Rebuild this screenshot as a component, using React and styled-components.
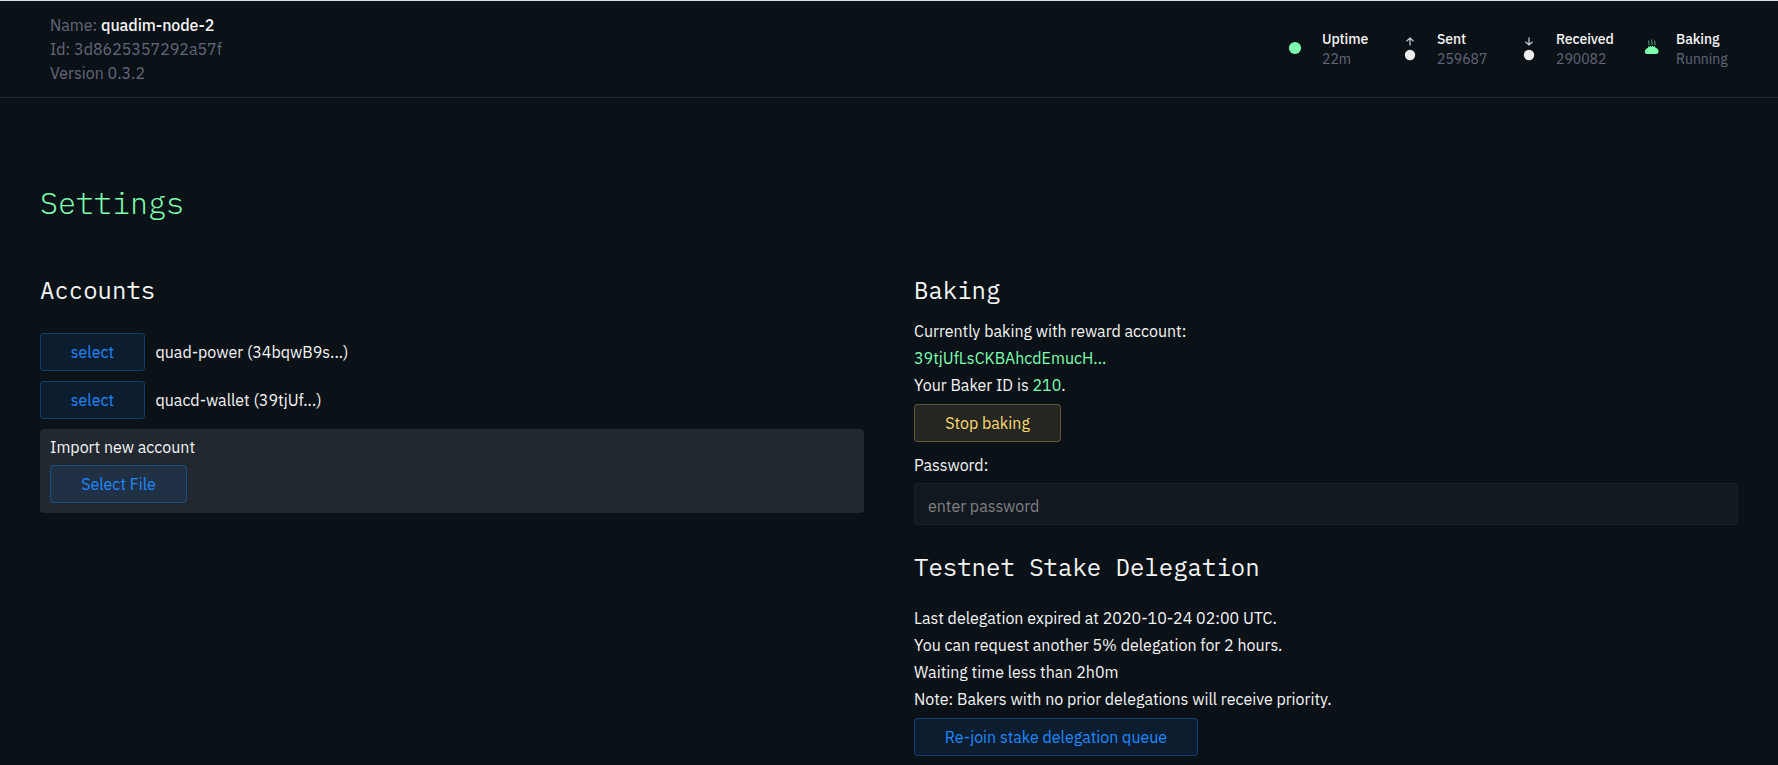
import React from "react";
import styled, { createGlobalStyle } from "styled-components";

const GlobalStyle = createGlobalStyle`
  *, *::before, *::after { box-sizing: border-box; }
  body {
    margin: 0;
    background: #0a1117;
    color: #f5f5f5;
    font: 400 16px/27px "IBM Plex Sans", Roboto, "Liberation Sans", sans-serif;
    overflow: hidden;
  }
`;

const GREEN = "#7dffaf";
const MUTED = "#64677a";

const Page = styled.div`
  height: 765px;
  overflow: hidden;
  border-top: 1px solid #dfe3e4;
`;

const Header = styled.header`
  display: flex;
  justify-content: space-between;
  height: 97px;
  padding: 12px 50px 0;
  border-bottom: 1px solid #1e272d;
`;

const NodeInfo = styled.div`
  color: ${MUTED};
  line-height: 24px;
`;

const NodeName = styled.span`
  color: #f5f5f5;
  font-weight: 500;
  letter-spacing: -0.1px;
`;

const Green = styled.span`
  color: ${GREEN};
`;

const Stats = styled.div`
  display: flex;
  padding-top: 16px;
`;

const Stat = styled.div`
  display: flex;
  width: ${(p) => p.$width}px;
`;

const StatIcon = styled.svg`
  flex: none;
  width: 20px;
  height: 40px;
  margin-right: 17px;
`;

const StatText = styled.div`
  font-size: 14px;
  line-height: 20px;
`;

const StatLabel = styled.div`
  font-weight: 500;
  letter-spacing: -0.1px;
`;

const StatValue = styled.div`
  color: ${MUTED};
`;

const Main = styled.main`
  padding: 85px 40px 0;
`;

const Title = styled.h1`
  margin: 0;
  color: ${GREEN};
  font: 300 30px/40px "IBM Plex Mono", "Liberation Mono", monospace;
`;

const Columns = styled.div`
  display: grid;
  grid-template-columns: 1fr 1fr;
  column-gap: 50px;
  padding-top: 51px;
`;

const Column = styled.section`
  min-width: 0;
`;

const Heading = styled.h2`
  margin: ${(p) => p.$top || 0}px 0 ${(p) => p.$gap}px;
  font: 400 24px/32px "IBM Plex Mono", "Liberation Mono", monospace;
`;

const tones = {
  blue: ["#1f88ff", "rgba(31, 136, 255, 0.1)", "rgba(31, 136, 255, 0.38)"],
  yellow: ["#ffd873", "rgba(255, 216, 115, 0.11)", "rgba(255, 216, 115, 0.36)"],
};

const Button = styled.button`
  display: block;
  flex: none;
  width: ${(p) => p.$width}px;
  height: 38px;
  padding: 0;
  border: 1px solid ${(p) => tones[p.$tone || "blue"][2]};
  border-radius: 4px;
  background: ${(p) => tones[p.$tone || "blue"][1]};
  background-clip: padding-box;
  color: ${(p) => tones[p.$tone || "blue"][0]};
  font: inherit;
  line-height: 26px;
`;

const AccountRow = styled.div`
  display: flex;
  align-items: center;
  gap: 10.5px;
  margin-bottom: 10px;
  line-height: 28px;
`;

const ImportBox = styled.div`
  height: 84px;
  padding: 5px 10px;
  border-radius: 4px;
  background: #222830;
`;

const ImportLabel = styled.div`
  margin-bottom: 4px;
`;

const Line = styled.div`
  white-space: nowrap;
`;

const StopArea = styled.div`
  padding: 5px 0 10px;
`;

const Password = styled.input`
  display: block;
  width: 100%;
  height: 42px;
  margin-top: 4px;
  padding: 3px 13px 0;
  border: 1px solid #1b222b;
  border-radius: 3px;
  outline: none;
  background: #121820;
  color: inherit;
  font: inherit;
  &::placeholder { color: #808080; opacity: 1; }
`;

const QueueArea = styled.div`
  padding-top: 5px;
`;

function Dot() {
  return (
    <StatIcon viewBox="0 0 20 40">
      <circle cx="10" cy="19" r="6.1" fill={GREEN} />
    </StatIcon>
  );
}

function ArrowDot({ down }) {
  return (
    <StatIcon viewBox="0 0 20 40">
      <path
        d={down ? "M10 8.5v7.5M6.5 12.8l3.5 3.2 3.5-3.2" : "M10 16.5V9M6.5 12.2 10 9l3.5 3.2"}
        fill="none"
        stroke="#d0d3d5"
        strokeWidth="1.2"
      />
      <circle cx="10" cy="26" r="5.2" fill="#eeeeee" />
    </StatIcon>
  );
}

function Bread() {
  return (
    <StatIcon viewBox="-0.8 0 20 40">
      <path
        d="M8.900 11.500c-.9 1.400.9 2.200.1 4.500M12 10.500c-.9 1.400.8 2.600 0 5.300M15 11.500c-.9 1.400.9 2.200.1 4.500"
        fill="none"
        stroke={GREEN}
        strokeOpacity="0.65"
        strokeWidth="1"
      />
      <path
        d="M7.600 25c-1.600 0-2.600-.8-2.600-2.300 0-2 1.500-3.200 3.300-4l.5-1.800 1 1.200 1-1.500.9 1.300 1.200-1.300.9 1.400 1.100-1.300.6 1.700c1.900.7 3.300 2.200 3.300 4.200 0 1.600-1 2.400-2.600 2.400z"
        fill={GREEN}
      />
    </StatIcon>
  );
}

const stats = [
  { icon: <Dot />, label: "Uptime", value: "22m", width: 115 },
  { icon: <ArrowDot />, label: "Sent", value: "259687", width: 119 },
  { icon: <ArrowDot down />, label: "Received", value: "290082", width: 120 },
  { icon: <Bread />, label: "Baking", value: "Running", width: 89 },
];

const accounts = ["quad-power (34bqwB9s...)", "quacd-wallet (39tjUf...)"];

export default function App() {
  return (
    <Page>
      <GlobalStyle />
      <Header>
        <NodeInfo>
          <div>Name: <NodeName>quadim-node-2</NodeName></div>
          <div>Id: 3d8625357292a57f</div>
          <div>Version 0.3.2</div>
        </NodeInfo>
        <Stats>
          {stats.map((s) => (
            <Stat key={s.label} $width={s.width}>
              {s.icon}
              <StatText>
                <StatLabel>{s.label}</StatLabel>
                <StatValue>{s.value}</StatValue>
              </StatText>
            </Stat>
          ))}
        </Stats>
      </Header>
      <Main>
        <Title>Settings</Title>
        <Columns>
          <Column>
            <Heading $gap={27}>Accounts</Heading>
            {accounts.map((name) => (
              <AccountRow key={name}>
                <Button $width={105}>select</Button>
                <Line>{name}</Line>
              </AccountRow>
            ))}
            <ImportBox>
              <ImportLabel>Import new account</ImportLabel>
              <Button $width={137}>Select File</Button>
            </ImportBox>
          </Column>
          <Column>
            <Heading $gap={12}>Baking</Heading>
            <Line>Currently baking with reward account:</Line>
            <Line><Green>39tjUfLsCKBAhcdEmucH...</Green></Line>
            <Line>Your Baker ID is <Green>210</Green>.</Line>
            <StopArea>
              <Button $tone="yellow" $width={147}>Stop baking</Button>
            </StopArea>
            <Line>Password:</Line>
            <Password type="password" placeholder="enter password" />
            <Heading $top={26} $gap={22}>Testnet Stake Delegation</Heading>
            <Line>Last delegation expired at 2020-10-24 02:00 UTC.</Line>
            <Line>You can request another 5% delegation for 2 hours.</Line>
            <Line>Waiting time less than 2h0m</Line>
            <Line>Note: Bakers with no prior delegations will receive priority.</Line>
            <QueueArea>
              <Button $width={284}>Re-join stake delegation queue</Button>
            </QueueArea>
          </Column>
        </Columns>
      </Main>
    </Page>
  );
}
